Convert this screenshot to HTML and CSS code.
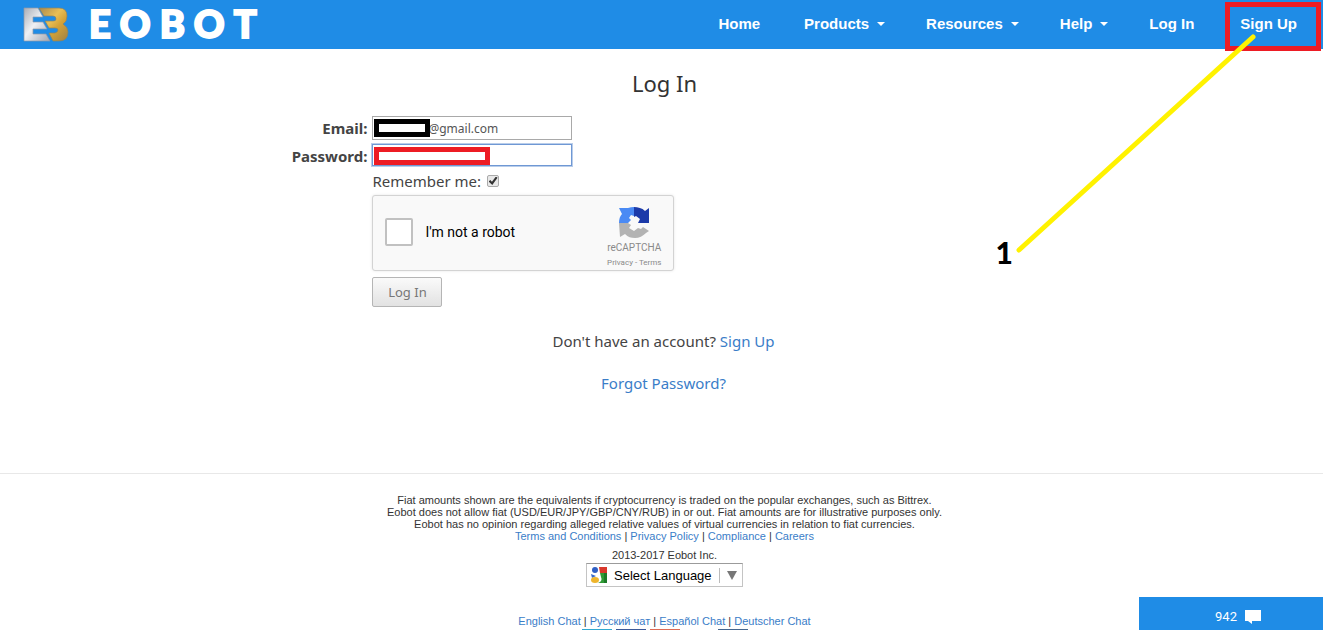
FILE: index.html
```html
<!DOCTYPE html>
<html lang="en">
<head>
  <meta charset="UTF-8">
  <meta name="viewport" content="width=device-width, initial-scale=1.0">
  <title>Log In - Eobot</title>
  <link rel="stylesheet" href="styles.css">
</head>
<body>
  <header class="navbar">
    <a href="#" class="brand" aria-label="Eobot">
      <svg class="brand-mark" viewBox="0 0 46 36" aria-hidden="true">
        <defs>
          <linearGradient id="silver" x1="0" y1="0" x2="1" y2="1">
            <stop offset="0" stop-color="#a9adb5"/>
            <stop offset=".45" stop-color="#eef0f4"/>
            <stop offset="1" stop-color="#a4a7b0"/>
          </linearGradient>
          <linearGradient id="gold" x1="0" y1="0" x2="1" y2="1">
            <stop offset="0" stop-color="#a88950"/>
            <stop offset=".4" stop-color="#e9bf55"/>
            <stop offset=".6" stop-color="#d5a337"/>
            <stop offset="1" stop-color="#9d8046"/>
          </linearGradient>
        </defs>
        <path fill="url(#silver)" stroke="#8f99a8" stroke-width=".7" d="M1 1h14l5 9H10v5h10l4 7H10v5h13l4 7H1z"/>
        <path fill="url(#gold)" stroke="#8b8462" stroke-width=".7" d="M16 1h20q8 0 8 8 0 6-4 8 5 3 5 8 0 9-9 9h-6l-4-8h6q3-1 3-3t-3-2h-6l-4-7h8q3 0 3-2 0-3-3-3h-9z"/>
      </svg>
      <span class="brand-name"><span>E</span><span>O</span><span>B</span><span>O</span><span>T</span></span>
    </a>
    <nav class="nav-links">
      <a href="#">Home</a>
      <a href="#" class="dropdown">Products</a>
      <a href="#" class="dropdown">Resources</a>
      <a href="#" class="dropdown">Help</a>
      <a href="#">Log In</a>
      <a href="#" class="marked">Sign Up</a>
    </nav>
  </header>

  <main class="login">
    <h1>Log In</h1>
    <form class="login-form">
      <label for="email">Email:</label>
      <div class="field">
        <input type="text" id="email" class="text-input" value="@gmail.com">
        <span class="redact redact-black"></span>
      </div>

      <label for="password">Password:</label>
      <div class="field">
        <input type="password" id="password" class="text-input focused">
        <span class="redact redact-red"></span>
      </div>

      <div class="remember">
        <label for="remember">Remember me:</label>
        <input type="checkbox" id="remember" checked>
      </div>

      <div class="captcha">
        <input type="checkbox" id="robot">
        <label for="robot">I'm not a robot</label>
        <div class="captcha-brand">
          <svg viewBox="0 0 32 32" aria-hidden="true">
            <path fill="#4a8af4" d="M16 1v9l-3-1-2 3 2 2-3 3H1c0-4 1-7 3-9L1 2h9q3-1 6-1z"/>
            <path fill="#1c3aa9" d="M16 1c4 0 8 1 11 4l4-3v15H20l2-4-4-3-2 1z"/>
            <path fill="#b3b3b3" d="M1 17h9l3 2-2 3 5 3 4-3 3 1 2-2 6 4-3 2c-3 3-7 5-11 5-4 0-7-1-10-4l-5 3z"/>
          </svg>
          <span class="captcha-title">reCAPTCHA</span>
          <span class="captcha-links"><a href="#">Privacy</a> - <a href="#">Terms</a></span>
        </div>
      </div>

      <button type="button" class="submit">Log In</button>
    </form>
    <p>Don't have an account? <a href="#">Sign Up</a></p>
    <p><a href="#">Forgot Password?</a></p>
  </main>

  <footer class="footer">
    <p>Fiat amounts shown are the equivalents if cryptocurrency is traded on the popular exchanges, such as Bittrex.<br>
      Eobot does not allow fiat (USD/EUR/JPY/GBP/CNY/RUB) in or out. Fiat amounts are for illustrative purposes only.<br>
      Eobot has no opinion regarding alleged relative values of virtual currencies in relation to fiat currencies.</p>
    <p><a href="#">Terms and Conditions</a> | <a href="#">Privacy Policy</a> | <a href="#">Compliance</a> | <a href="#">Careers</a></p>
    <p class="copyright">2013-2017 Eobot Inc.</p>
    <div class="translate">
      <svg viewBox="0 0 18 18" aria-hidden="true">
        <path fill="#d9382c" d="M9 1h8v6h-7z"/>
        <path fill="#2f9b35" d="M10 7h7v10H8q5-2 3-6z"/>
        <path fill="#1c7a28" d="M14 7h3v10h-3z"/>
        <circle cx="5" cy="4" r="3" fill="#2f5fc4"/>
        <path fill="#3769c8" d="M1 8l5 2-4 2z"/>
        <ellipse cx="5" cy="14" rx="4" ry="3" fill="#eeb52c"/>
      </svg>
      <select aria-label="Language"><option>Select Language</option></select>
      <span class="arrow"></span>
    </div>
    <p class="chats"><a href="#">English Chat</a> | <a href="#">Русский чат</a> | <a href="#">Español Chat</a> | <a href="#">Deutscher Chat</a></p>
    <div class="social">
      <a href="#" class="twitter" aria-label="Twitter"></a>
      <a href="#" class="facebook" aria-label="Facebook"></a>
      <a href="#" class="google" aria-label="Google Plus"></a>
      <a href="#" class="blank" aria-label="Reddit"></a>
      <a href="#" class="vk" aria-label="VK"></a>
    </div>
  </footer>

  <button type="button" class="chat-bar">
    942
    <svg viewBox="0 0 16 15" aria-hidden="true"><path fill="#fff" d="M0 1h16v11H7v3l-4-3H0z"/></svg>
  </button>

  <!-- callout pointing at Sign Up -->
  <div class="callout">
    <span class="callout-number">1</span>
    <svg viewBox="0 0 240 220" aria-hidden="true"><path d="M3 216L237 3" stroke="#fff200" stroke-width="5" stroke-linecap="round"/></svg>
  </div>
</body>
</html>
```
FILE: styles.css
```css
* {
  margin: 0;
  padding: 0;
  box-sizing: border-box;
}
html, body {
  height: 100%;
}
body {
  position: relative;
  overflow: hidden;
  font-family: "Noto Sans", "Open Sans", sans-serif;
  font-size: 15px;
  line-height: 20px;
  background: #fff;
  color: #444;
}
a {
  color: #3a7dc8;
  text-decoration: none;
}

/* Navbar */
.navbar {
  display: flex;
  justify-content: space-between;
  align-items: center;
  height: 49px;
  padding: 0 26px 0 23px;
  background: #1f8ce6;
}
.brand {
  display: flex;
  align-items: center;
  gap: 20px;
  color: #fff;
}
.brand-mark {
  width: 46px;
  height: 36px;
}
.brand-name {
  display: flex;
  gap: 9px;
  padding-bottom: 3px;
  font-family: Lato, sans-serif;
  font-size: 38px;
  font-weight: 900;
  line-height: 46px;
  -webkit-text-stroke: 2px #fff;
}
.nav-links {
  display: flex;
  gap: 44px;
  padding-bottom: 2px;
  font-family: "Liberation Sans", Arial, sans-serif;
  font-size: 15px;
  font-weight: bold;
}
.nav-links a {
  color: #fff;
}
.dropdown {
  display: flex;
  align-items: center;
  gap: 8px;
  margin-right: -3px;
}
.dropdown::after {
  content: "";
  border: 4px solid transparent;
  border-top-color: #fff;
  border-bottom: 0;
}
.nav-links .marked {
  position: relative;
  margin-left: 2px;
}
.marked::after {
  content: "";
  position: absolute;
  top: -12px;
  right: -24px;
  bottom: -17px;
  left: -15px;
  border: 5px solid #ed1c24;
}

/* Login */
.login {
  height: 424px;
  text-align: center;
}
.login h1 {
  padding: 19px 0 18px 6px;
  font-size: 22px;
  font-weight: normal;
  line-height: 30px;
  color: #333;
}
.login-form {
  display: grid;
  grid-template-columns: 28% 1fr;
  column-gap: 2px;
  text-align: left;
  margin-bottom: 24px;
}
.login-form > label {
  padding: 2px 3px 0 0;
  text-align: right;
  font-weight: bold;
}
.field {
  position: relative;
  height: 28px;
}
.text-input {
  display: block;
  width: 200px;
  height: 24px;
  padding-left: 55px;
  border: 1px solid #a9a9a9;
  font-family: inherit;
  font-size: 12px;
  color: #555;
}
.focused {
  height: 22px;
  border-color: #6f98d4;
  outline: 1px solid #b9cdea;
}
.redact {
  position: absolute;
  top: 3px;
  left: 2px;
  height: 18px;
  background: #fff;
}
.redact-black {
  width: 56px;
  border: 5px solid #000;
}
.redact-red {
  width: 116px;
  border: 5px solid #ed1c24;
}
.remember,
.captcha,
.submit {
  grid-column: 2;
}
.remember {
  display: flex;
  align-items: center;
  gap: 6px;
  height: 18px;
  margin-bottom: 5px;
}
.remember input {
  appearance: none;
  display: grid;
  place-items: center;
  width: 12px;
  height: 12px;
  border: 1px solid #aaa;
  border-radius: 2px;
  background: #e8e8e8;
}
.remember input:checked::before {
  content: "";
  width: 9px;
  height: 9px;
  background: #333;
  clip-path: polygon(0 55%, 20% 38%, 38% 58%, 82% 0, 100% 15%, 42% 95%);
}
.captcha {
  display: flex;
  align-items: center;
  gap: 12px;
  width: 302px;
  height: 76px;
  padding: 0 12px 3px;
  border: 1px solid #d3d3d3;
  border-radius: 3px;
  background: #f9f9f9;
  box-shadow: 0 0 3px rgba(0,0,0,0.1);
  font-family: Roboto, sans-serif;
  font-size: 14px;
  color: #000;
}
.captcha input {
  appearance: none;
  width: 28px;
  height: 28px;
  border: 2px solid #c1c1c1;
  border-radius: 2px;
  background: #fff;
}
.captcha-brand {
  display: flex;
  flex-direction: column;
  align-items: center;
  margin-left: auto;
  padding-top: 10px;
  color: #8a8a8a;
}
.captcha-brand svg {
  width: 32px;
  height: 32px;
}
.captcha-title {
  font-size: 10px;
  line-height: 20px;
}
.captcha-links {
  font-size: 8px;
  line-height: 10px;
}
.captcha-links a {
  color: inherit;
}
.submit {
  justify-self: start;
  width: 70px;
  height: 30px;
  margin-top: 6px;
  border: 1px solid #b5b5b5;
  border-radius: 2px;
  background: linear-gradient(#fafafa, #e2e2e2);
  font-family: inherit;
  font-size: 13px;
  color: #777;
}
.login p {
  margin-bottom: 22px;
  padding-left: 4px;
}

/* Footer */
.footer {
  display: flex;
  flex-direction: column;
  align-items: center;
  padding: 20px 0 0 6px;
  border-top: 1px solid #e8e8e8;
  font-family: "Liberation Sans", Arial, sans-serif;
  font-size: 11px;
  line-height: 12px;
  text-align: center;
  color: #333;
}
.copyright {
  margin: 7px 0 2px;
}
.translate {
  display: flex;
  align-items: center;
  width: 157px;
  height: 24px;
  padding: 0 5px 0 3px;
  border: 1px solid #c4c4c4;
  border-top-color: #9b9b9b;
}
.translate svg {
  width: 18px;
  height: 18px;
}
.translate select {
  appearance: none;
  width: 112px;
  margin-right: 7px;
  padding-left: 6px;
  border: 0;
  border-right: 1px solid #bbb;
  background: none;
  font-family: inherit;
  font-size: 13px;
  color: #000;
}
.arrow {
  border: 5px solid transparent;
  border-top: 9px solid #777;
  border-bottom: 0;
}
.chats {
  margin-top: 28px;
}
.social {
  display: flex;
  gap: 4px;
  margin-top: 2px;
}
.social a {
  width: 30px;
  height: 20px;
}
.twitter { background: #31a8cf; }
.facebook { background: #3b5998; }
.google { background: #dd6b55; }
.blank { background: #fff; }
.vk { background: #45668e; }

/* Chat bar */
.chat-bar {
  position: fixed;
  right: 0;
  bottom: 0;
  display: flex;
  justify-content: center;
  align-items: center;
  gap: 8px;
  width: 184px;
  height: 33px;
  padding: 6px 0 0 14px;
  border: 0;
  background: #1f8ce6;
  font-family: Roboto, sans-serif;
  font-size: 13px;
  color: #fff;
}
.chat-bar svg {
  width: 16px;
  height: 15px;
}

/* Callout */
.callout {
  position: absolute;
  top: 34px;
  right: 67px;
  display: flex;
  align-items: flex-end;
  gap: 3px;
}
.callout svg {
  width: 240px;
  height: 220px;
  margin-bottom: 13px;
}
.callout-number {
  font-family: Lato, sans-serif;
  font-size: 30px;
  font-weight: 900;
  line-height: 30px;
  color: #000;
}
```
